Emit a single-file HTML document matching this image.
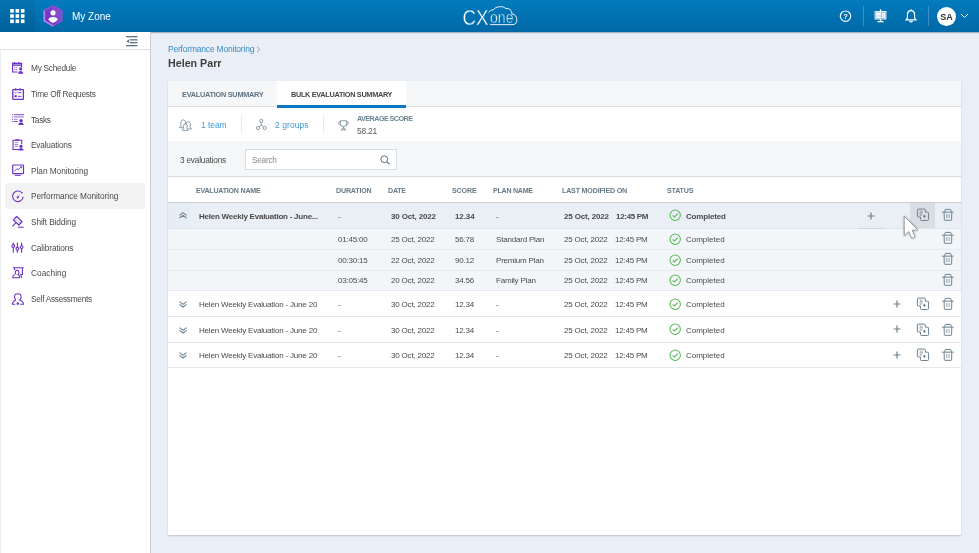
<!DOCTYPE html>
<html><head><meta charset="utf-8">
<style>
*{box-sizing:border-box;margin:0;padding:0}
html,body{width:979px;height:553px;overflow:hidden}
body{font-family:"Liberation Sans",sans-serif;background:#eaeff7;position:relative}
.a{position:absolute;white-space:nowrap;will-change:transform}
svg.a{overflow:visible}
</style></head><body>
<div class="a" style="left:0px;top:0px;width:979px;height:32px;background:linear-gradient(#037bbd,#0068a6);box-shadow:0 1px 1px rgba(0,40,80,.3)"></div>
<div class="a" style="left:0px;top:0px;width:35px;height:32px;background:linear-gradient(#0573b2,#00609a);"></div>
<svg class="a" style="left:0px;top:0px;" width="35" height="32" viewBox="0 0 35 32"><g fill="#fff"><rect x="10.2" y="9.0" width="3.6" height="3.7"/><rect x="10.2" y="14.2" width="3.6" height="3.7"/><rect x="10.2" y="19.4" width="3.6" height="3.7"/><rect x="15.549999999999999" y="9.0" width="3.6" height="3.7"/><rect x="15.549999999999999" y="14.2" width="3.6" height="3.7"/><rect x="15.549999999999999" y="19.4" width="3.6" height="3.7"/><rect x="20.9" y="9.0" width="3.6" height="3.7"/><rect x="20.9" y="14.2" width="3.6" height="3.7"/><rect x="20.9" y="19.4" width="3.6" height="3.7"/></g></svg>
<svg class="a" style="left:41.5px;top:4px;" width="22" height="24" viewBox="0 0 22 24"><polygon points="11,1 20.5,6.3 20.5,17.2 11,22.8 1.5,17.2 1.5,6.3" fill="#8c4fd8"/><polygon points="1.5,6.3 3.2,7.2 3.2,16.3 11,21 11,22.8 1.5,17.2" fill="#b584f0"/><polygon points="11,2.8 18.8,7.2 18.8,16.3 11,21 3.2,16.3 3.2,7.2" fill="#7436c4"/><polygon points="11,2.8 18.8,7.2 18.8,16.3 15,18.6 8,9" fill="#8a55d0" opacity=".7"/><circle cx="11" cy="8.8" r="2.6" fill="#fff"/><path d="M6.4 15.4 Q6.8 12.9 11 12.9 Q15.2 12.9 15.6 15.4 Q14.5 17.6 11 18.9 Q7.5 17.6 6.4 15.4Z" fill="#fff"/></svg>
<div class="a" style="left:71.5px;top:12.00px;font-size:10px;line-height:10px;color:#fff;font-weight:normal;">My Zone</div>
<svg class="a" style="left:455px;top:0px;" width="70" height="32" viewBox="0 0 70 32"><text x="7.6" y="25" font-family="Liberation Sans" font-size="22.5" textLength="26" lengthAdjust="spacingAndGlyphs" fill="#fff" stroke="#0670b0" stroke-width="0.4">CX</text></svg>
<svg class="a" style="left:486px;top:5px;" width="32" height="22" viewBox="0 0 32 22"><path d="M4 19.6 L27 19.6 Q31 19.3 30.8 14.5 Q30.6 9.5 26 9 Q25.5 3 20 3.5 Q17 0.8 12.5 1.8 Q8.5 2.5 7.5 4.8 Q4.5 4.5 2.6 7.5" fill="none" stroke="#fff" stroke-width="0.9"/><text x="4" y="18.2" font-family="Liberation Sans" font-size="16" textLength="23.5" lengthAdjust="spacingAndGlyphs" fill="#fff" stroke="#0773b4" stroke-width="0.55">one</text></svg>
<svg class="a" style="left:839px;top:10px;" width="13" height="13" viewBox="0 0 13 13"><circle cx="6.5" cy="6.2" r="5.2" fill="none" stroke="#fff" stroke-width="1.2"/><text x="6.5" y="9.1" text-anchor="middle" font-family="Liberation Sans" font-weight="bold" font-size="7.5" fill="#fff">?</text></svg>
<div class="a" style="left:863px;top:6px;width:1px;height:20px;background:rgba(255,255,255,.22);"></div>
<svg class="a" style="left:874px;top:9px;" width="13" height="14" viewBox="0 0 13 14"><g fill="#fff"><rect x="5.9" y="0.4" width="1.3" height="2"/><rect x="0.6" y="2" width="11.8" height="8.4" rx="0.5"/><rect x="5.9" y="10" width="1.3" height="2.4"/><rect x="3.5" y="12" width="6" height="1.3"/></g><g fill="none" stroke="#5aa3d6" stroke-width=".55"><rect x="1.7" y="3.1" width="9.6" height="6.2"/><path d="M7.4 3.1 V9.3 M1.7 7 H7.4 M9.1 3.1 V9.3"/></g></svg>
<svg class="a" style="left:905px;top:9px;" width="12" height="14" viewBox="0 0 12 14"><path d="M6 1.6 Q9.6 1.6 9.6 6 L9.6 9 L11 10.9 L1 10.9 L2.4 9 L2.4 6 Q2.4 1.6 6 1.6Z" fill="none" stroke="#fff" stroke-width="1.2"/><path d="M4.4 12 Q6 13.6 7.6 12" fill="none" stroke="#fff" stroke-width="1.2"/><rect x="5.4" y="0.3" width="1.2" height="1.6" fill="#fff"/></svg>
<div class="a" style="left:928px;top:6px;width:1px;height:20px;background:rgba(255,255,255,.22);"></div>
<div class="a" style="left:937px;top:6.5px;width:19px;height:19px;background:#fff;border-radius:50%"></div>
<div class="a" style="left:937px;top:13.00px;font-size:9px;line-height:9px;color:#333;font-weight:bold;width:19px;text-align:center">SA</div>
<svg class="a" style="left:960px;top:13px;" width="9" height="6" viewBox="0 0 9 6"><path d="M1 1 L4.5 4.5 L8 1" fill="none" stroke="#fff" stroke-width="1"/></svg>
<div class="a" style="left:0px;top:32px;width:151px;height:521px;background:#fff;border-right:1px solid #cbd0d6"></div>
<div class="a" style="left:0px;top:49px;width:150px;height:1px;background:#dcdfe3;"></div>
<div class="a" style="left:0px;top:50px;width:1px;height:503px;background:#eeeeee;"></div>
<svg class="a" style="left:126px;top:36px;" width="12" height="11" viewBox="0 0 12 11"><g fill="#5f7381"><rect x="0" y="0" width="11.5" height="1.3"/><rect x="4" y="3.2" width="7.5" height="1.3"/><rect x="4" y="6" width="7.5" height="1.3"/><rect x="0" y="9" width="11.5" height="1.3"/><polygon points="0.3,5.2 3.2,3.2 3.2,7.2"/></g></svg>
<div class="a" style="left:5px;top:183px;width:140px;height:26px;background:#f3f3f3;border-radius:3px"></div>
<div class="a" style="left:31px;top:64.00px;font-size:8.3px;line-height:8.3px;color:#4b4b4b;font-weight:normal;letter-spacing:-0.262px;">My Schedule</div>
<div class="a" style="left:31px;top:90.00px;font-size:8.3px;line-height:8.3px;color:#4b4b4b;font-weight:normal;letter-spacing:-0.237px;">Time Off Requests</div>
<div class="a" style="left:31px;top:116.00px;font-size:8.3px;line-height:8.3px;color:#4b4b4b;font-weight:normal;letter-spacing:-0.303px;">Tasks</div>
<div class="a" style="left:31px;top:141.00px;font-size:8.3px;line-height:8.3px;color:#4b4b4b;font-weight:normal;letter-spacing:-0.201px;">Evaluations</div>
<div class="a" style="left:31px;top:167.00px;font-size:8.3px;line-height:8.3px;color:#4b4b4b;font-weight:normal;letter-spacing:-0.038px;">Plan Monitoring</div>
<div class="a" style="left:31px;top:192.00px;font-size:8.3px;line-height:8.3px;color:#4b4b4b;font-weight:normal;letter-spacing:-0.058px;">Performance Monitoring</div>
<div class="a" style="left:31px;top:218.00px;font-size:8.3px;line-height:8.3px;color:#4b4b4b;font-weight:normal;letter-spacing:-0.123px;">Shift Bidding</div>
<div class="a" style="left:31px;top:244.00px;font-size:8.3px;line-height:8.3px;color:#4b4b4b;font-weight:normal;letter-spacing:-0.119px;">Calibrations</div>
<div class="a" style="left:31px;top:269.00px;font-size:8.3px;line-height:8.3px;color:#4b4b4b;font-weight:normal;letter-spacing:0.029px;">Coaching</div>
<div class="a" style="left:31px;top:295.00px;font-size:8.3px;line-height:8.3px;color:#4b4b4b;font-weight:normal;letter-spacing:-0.288px;">Self Assessments</div>
<svg class="a" style="left:12px;top:62px;" width="12.5" height="12.5" viewBox="0 0 12.5 12.5"><path d="M9.55 5.3 V1.2 H0.55 V9.95 H5.7" fill="none" stroke="#6a32c6" stroke-width="1.1"/><rect x="0" y="0.9" width="10.1" height="2.9" fill="#6a32c6"/><rect x="1.3" y="2.05" width="7.8" height="0.55" fill="#fff" opacity=".75"/><rect x="2.3" y="0" width="1" height="1.2" fill="#6a32c6"/><rect x="6.4" y="0" width="1" height="1.2" fill="#6a32c6"/><g fill="#6a32c6" opacity=".8"><rect x="2.1" y="5.2" width="1.3" height="0.9"/><rect x="4" y="5.2" width="1.3" height="0.9"/><rect x="2.1" y="7" width="1.3" height="0.9"/><rect x="4" y="7" width="1.3" height="0.9"/></g><circle cx="8.7" cy="6.9" r="1.55" fill="#6a32c6"/><path d="M6.1 11.8 Q6.4 9 8.7 9 Q11 9 11.4 11.8Z" fill="#6a32c6"/></svg>
<svg class="a" style="left:12px;top:88px;" width="12.5" height="12.5" viewBox="0 0 12.5 12.5"><rect x="0.8" y="1.7" width="10.6" height="9.6" rx="0.6" fill="none" stroke="#6a32c6" stroke-width="1.3"/><rect x="3.1" y="0.2" width="1.2" height="2.4" fill="#6a32c6"/><rect x="7.4" y="0.2" width="1.2" height="2.4" fill="#6a32c6"/><g fill="#6a32c6"><path d="M2.4 4.2 L3.3 5.3 L4.9 3.6" stroke="#6a32c6" stroke-width=".7" fill="none"/><rect x="5.9" y="4.2" width="3.6" height="0.9"/><rect x="2.4" y="7.2" width="2.3" height="2"/><rect x="5.9" y="7.9" width="3.6" height="0.9"/></g></svg>
<svg class="a" style="left:12px;top:114px;" width="12.5" height="12.5" viewBox="0 0 12.5 12.5"><g fill="#6a32c6"><circle cx="0.7" cy="0.7" r="0.6"/><circle cx="0.7" cy="3" r="0.6"/><circle cx="0.7" cy="5.3" r="0.6"/><circle cx="0.7" cy="7.6" r="0.6"/><rect x="2" y="0.3" width="9.9" height="0.9"/><rect x="2" y="2.5" width="9.9" height="0.9" opacity=".8"/><rect x="2" y="4.8" width="3.7" height="0.9" opacity=".7"/><rect x="2" y="7.1" width="3.7" height="0.9"/><circle cx="9" cy="6.6" r="1.7"/><path d="M6.1 10.9 Q6.8 8.3 9 8.3 Q11.2 8.3 11.9 10.9Z"/></g></svg>
<svg class="a" style="left:12px;top:139px;" width="12.5" height="12.5" viewBox="0 0 12.5 12.5"><path d="M9.6 10.5 L1 10.5 L1 1.3 L9.7 1.3 L9.7 5.3" fill="none" stroke="#6a32c6" stroke-width="1.1"/><rect x="3.2" y="0.3" width="4" height="1.4" fill="#6a32c6"/><g fill="#6a32c6" opacity=".75"><rect x="2.6" y="3.3" width="3.5" height="0.8"/><rect x="2.6" y="5.1" width="3.5" height="0.8"/><rect x="2.6" y="6.9" width="3.5" height="0.8"/></g><circle cx="9" cy="7.3" r="1.6" fill="#6a32c6"/><path d="M6.3 11.6 Q6.8 8.9 9 8.9 Q11.2 8.9 11.7 11.6Z" fill="#6a32c6"/></svg>
<svg class="a" style="left:12px;top:164px;" width="12.5" height="12.5" viewBox="0 0 12.5 12.5"><rect x="0.7" y="1" width="10.8" height="8.6" rx="0.6" fill="none" stroke="#6a32c6" stroke-width="1.2"/><rect x="2.8" y="10.8" width="6" height="1" fill="#6a32c6"/><path d="M2.2 7.4 L4.9 4.7 L6.1 5.8 L8.9 3.2" fill="none" stroke="#6a32c6" stroke-width="0.9"/><polygon points="7.6,2.4 10,2.3 9.9,4.6" fill="#6a32c6"/></svg>
<svg class="a" style="left:12px;top:190px;" width="12.5" height="12.5" viewBox="0 0 12.5 12.5"><path d="M10.3 3.3 A5.3 5.3 0 1 0 11.2 6.8" fill="none" stroke="#6a32c6" stroke-width="1.1"/><path d="M9.6 2.4 A5.3 5.3 0 0 1 10.3 3.3" fill="none" stroke="#6a32c6" stroke-width="1.1"/><path d="M4.9 7.5 L7.9 4.7 L6.4 8" fill="#6a32c6"/><circle cx="5.5" cy="7.5" r="0.9" fill="#6a32c6"/></svg>
<svg class="a" style="left:12px;top:215.5px;" width="12.5" height="12.5" viewBox="0 0 12.5 12.5"><polygon points="4.6,0.5 10.1,5.8 6.8,9 1.3,3.8" fill="none" stroke="#6a32c6" stroke-width="1.2" stroke-linejoin="round"/><path d="M2.9 2.3 L8.4 7.5" stroke="#6a32c6" stroke-width=".6" opacity=".6"/><path d="M0.4 10.4 L3.9 6.6" stroke="#6a32c6" stroke-width="1.1"/><rect x="6" y="10.6" width="5.7" height="1.4" fill="#6a32c6" opacity=".75"/></svg>
<svg class="a" style="left:12px;top:241.5px;" width="12.5" height="12.5" viewBox="0 0 12.5 12.5"><g stroke="#6a32c6" stroke-width="1.1" fill="#fff"><path d="M1.3 0.6 V10.8 M5.4 0.6 V10.8 M9.6 0.6 V10.8"/><circle cx="1.3" cy="4" r="1.4"/><circle cx="5.4" cy="6.8" r="1.4"/><circle cx="9.6" cy="5.1" r="1.4"/></g></svg>
<svg class="a" style="left:12px;top:267px;" width="12.5" height="12.5" viewBox="0 0 12.5 12.5"><g fill="none" stroke="#6a32c6" stroke-width="1.1"><path d="M1 0.8 L11.7 0.8 M2.4 0.8 L2.6 3 M10.4 0.8 L10.4 7.2 L8.7 7.4 L9.7 11"/><path d="M4.2 7.4 Q3.2 6.8 3.2 5.3 Q3.4 3.4 5.1 3.4 Q6.9 3.4 7 5.3 Q7 6.8 6 7.4 Q7.8 8.2 7.6 10.8 L0.8 10.8 Q0.6 8.2 2.6 7.5"/></g></svg>
<svg class="a" style="left:12px;top:292.5px;" width="12.5" height="12.5" viewBox="0 0 12.5 12.5"><g fill="none" stroke="#6a32c6" stroke-width="1.1"><path d="M4 6.9 Q2.5 5.8 2.5 3.7 Q2.6 0.8 5.8 0.8 Q9 0.8 9.1 3.7 Q9.1 5.8 7.6 6.9 Q11.5 8.2 11.5 11.3 L8.3 11.3 M3.3 11.3 L0.4 11.3 Q0.5 8.2 4 6.9"/></g><polygon points="5.8,8.6 6.4,9.8 7.6,9.9 6.7,10.8 6.9,12 5.8,11.4 4.7,12 4.9,10.8 4,9.9 5.2,9.8" fill="#6a32c6"/></svg>
<div class="a" style="left:168px;top:45.00px;font-size:8.5px;line-height:8.5px;color:#3b8ac2;font-weight:normal;letter-spacing:-0.205px;">Performance Monitoring</div>
<svg class="a" style="left:256.3px;top:46px;" width="5" height="7" viewBox="0 0 5 7"><path d="M1 0.8 L3.8 3.5 L1 6.2" fill="none" stroke="#7d8a94" stroke-width=".8"/></svg>
<div class="a" style="left:168px;top:58.00px;font-size:10.7px;line-height:10.7px;color:#3e3e3e;font-weight:bold;">Helen Parr</div>
<div class="a" style="left:168px;top:81px;width:793px;height:454px;background:#fff;box-shadow:0 1px 1.5px rgba(110,120,140,.35)"></div>
<div class="a" style="left:168px;top:81px;width:793px;height:25.5px;background:#f5f7f9;"></div>
<div class="a" style="left:168px;top:106px;width:793px;height:1px;background:#d9dde1;"></div>
<div class="a" style="left:277px;top:81px;width:129px;height:26px;background:#fff;"></div>
<div class="a" style="left:277px;top:104.5px;width:129px;height:2.5px;background:#0a78c2;"></div>
<div class="a" style="left:182px;top:91.00px;font-size:7.3px;line-height:7.3px;color:#5f7383;font-weight:bold;letter-spacing:-0.241px;">EVALUATION SUMMARY</div>
<div class="a" style="left:290.8px;top:91.00px;font-size:7.3px;line-height:7.3px;color:#454545;font-weight:bold;letter-spacing:-0.302px;">BULK EVALUATION SUMMARY</div>
<svg class="a" style="left:179px;top:117.5px;" width="13" height="13" viewBox="0 0 13 13"><g fill="#fff" stroke="#7b8e9a" stroke-width=".85" stroke-linejoin="round"><path d="M2.4 7.6 Q1.6 6.6 1.8 4.4 Q2.1 1.8 4.2 1.8 Q6.2 1.8 6.5 4.2 Q6.7 6.5 5.6 7.6 Q7 8.3 7 9.7 L0.6 9.7 Q0.6 8.3 2.4 7.6Z"/><path d="M7.6 9 Q6.7 8 6.9 6 Q7.2 3.6 9.2 3.6 Q11.2 3.6 11.4 6 Q11.6 8 10.7 9 Q12.3 9.6 12.3 11 L6 11 Q6 9.6 7.6 9Z"/><path d="M4.8 10.2 Q4.1 9.4 4.3 7.8 Q4.6 6 6.3 6 Q8 6 8.2 7.8 Q8.4 9.4 7.7 10.2 Q9.1 10.8 9.1 12.3 L3.4 12.3 Q3.4 10.8 4.8 10.2Z"/></g></svg>
<div class="a" style="left:201.3px;top:121.00px;font-size:8.5px;line-height:8.5px;color:#3f9bd3;font-weight:normal;letter-spacing:-0.064px;">1 team</div>
<div class="a" style="left:241px;top:115px;width:1px;height:18px;background:#e6e9ed;"></div>
<svg class="a" style="left:256px;top:119px;" width="11" height="11" viewBox="0 0 11 11"><g fill="none" stroke="#7b8e9a" stroke-width=".9"><circle cx="5.3" cy="2" r="1.6"/><circle cx="2" cy="9" r="1.6"/><circle cx="8.6" cy="9" r="1.6"/><path d="M5.3 3.6 V6 L3.2 7.8 M5.3 6 L7.4 7.8"/></g></svg>
<div class="a" style="left:275.4px;top:121.00px;font-size:8.5px;line-height:8.5px;color:#3f9bd3;font-weight:normal;letter-spacing:0.066px;">2 groups</div>
<div class="a" style="left:323px;top:115px;width:1px;height:18px;background:#e6e9ed;"></div>
<svg class="a" style="left:337.5px;top:119.5px;" width="11" height="11" viewBox="0 0 11 11"><g fill="none" stroke="#7b8e9a" stroke-width=".9"><path d="M2.3 0.8 H8.7 V3.6 Q8.7 6.6 5.5 6.6 Q2.3 6.6 2.3 3.6Z"/><path d="M2.3 1.8 Q0.5 1.8 0.6 3.2 Q0.8 4.8 2.6 5 M8.7 1.8 Q10.5 1.8 10.4 3.2 Q10.2 4.8 8.4 5"/><path d="M5.5 6.6 V8.4 M3 10 H8 L6.6 8.4 H4.4Z"/></g></svg>
<div class="a" style="left:357px;top:115.00px;font-size:7.3px;line-height:7.3px;color:#6f8797;font-weight:bold;letter-spacing:-0.619px;">AVERAGE SCORE</div>
<div class="a" style="left:357px;top:127.00px;font-size:8.5px;line-height:8.5px;color:#5a5a5a;font-weight:normal;letter-spacing:-0.254px;">58.21</div>
<div class="a" style="left:168px;top:141px;width:793px;height:35px;background:#f5f7f9;"></div>
<div class="a" style="left:168px;top:176px;width:793px;height:1px;background:#d8dbde;"></div>
<div class="a" style="left:180px;top:156.00px;font-size:8.3px;line-height:8.3px;color:#4a4a4a;font-weight:normal;letter-spacing:-0.227px;">3 evaluations</div>
<div class="a" style="left:245px;top:149px;width:151.5px;height:20.5px;background:#fff;border:1px solid #d6dde4"></div>
<div class="a" style="left:252.3px;top:156.00px;font-size:8.3px;line-height:8.3px;color:#8a8a8a;font-weight:normal;letter-spacing:-0.264px;">Search</div>
<svg class="a" style="left:380px;top:155px;" width="11" height="10" viewBox="0 0 11 10"><circle cx="4.3" cy="4.2" r="3.4" fill="none" stroke="#5e6e7a" stroke-width="1"/><path d="M6.8 6.7 L9.6 9.4" stroke="#5e6e7a" stroke-width="1.1"/></svg>
<div class="a" style="left:196px;top:188.00px;font-size:7.1px;line-height:7.1px;color:#657b89;font-weight:bold;letter-spacing:-0.229px;">EVALUATION NAME</div>
<div class="a" style="left:336px;top:188.00px;font-size:7.1px;line-height:7.1px;color:#657b89;font-weight:bold;letter-spacing:-0.178px;">DURATION</div>
<div class="a" style="left:388.4px;top:188.00px;font-size:7.1px;line-height:7.1px;color:#657b89;font-weight:bold;letter-spacing:-0.228px;">DATE</div>
<div class="a" style="left:452.4px;top:188.00px;font-size:7.1px;line-height:7.1px;color:#657b89;font-weight:bold;letter-spacing:-0.142px;">SCORE</div>
<div class="a" style="left:493.2px;top:188.00px;font-size:7.1px;line-height:7.1px;color:#657b89;font-weight:bold;letter-spacing:-0.259px;">PLAN NAME</div>
<div class="a" style="left:562.2px;top:188.00px;font-size:7.1px;line-height:7.1px;color:#657b89;font-weight:bold;letter-spacing:-0.175px;">LAST MODIFIED ON</div>
<div class="a" style="left:667px;top:188.00px;font-size:7.1px;line-height:7.1px;color:#657b89;font-weight:bold;letter-spacing:-0.192px;">STATUS</div>
<div class="a" style="left:168px;top:202px;width:793px;height:1.3px;background:#c9cdd1;"></div>
<div class="a" style="left:168px;top:203.2px;width:793px;height:25px;background:#eaeef5;"></div>
<div class="a" style="left:168px;top:203.2px;width:21.5px;height:25px;background:#e7edf5;"></div>
<div class="a" style="left:168px;top:228px;width:793px;height:0.8px;background:#e1e6ec;"></div>
<svg class="a" style="left:179px;top:212px;" width="8" height="7" viewBox="0 0 8 7"><path d="M0.5 3.4 L4 0.7 L7.5 3.4 M0.5 6 L4 3.3 L7.5 6" fill="none" stroke="#6b8190" stroke-width="1.05"/></svg>
<div class="a" style="left:198.6px;top:213.00px;font-size:8.0px;line-height:8.0px;color:#4a4a4a;font-weight:bold;letter-spacing:-0.235px;">Helen Weekly Evaluation - June...</div>
<div class="a" style="left:338px;top:213.00px;font-size:8.0px;line-height:8.0px;color:#4a4a4a;font-weight:normal;letter-spacing:-0.133px;">-</div>
<div class="a" style="left:390.8px;top:213.00px;font-size:8.0px;line-height:8.0px;color:#4a4a4a;font-weight:bold;letter-spacing:-0.156px;">30 Oct, 2022</div>
<div class="a" style="left:455.2px;top:213.00px;font-size:8.0px;line-height:8.0px;color:#4a4a4a;font-weight:bold;letter-spacing:-0.086px;">12.34</div>
<div class="a" style="left:496px;top:213.00px;font-size:8.0px;line-height:8.0px;color:#4a4a4a;font-weight:normal;letter-spacing:-0.133px;">-</div>
<div class="a" style="left:564.1px;top:213.00px;font-size:8.0px;line-height:8.0px;color:#4a4a4a;font-weight:bold;letter-spacing:-0.156px;">25 Oct, 2022</div>
<div class="a" style="left:615.7px;top:213.00px;font-size:8.0px;line-height:8.0px;color:#4a4a4a;font-weight:bold;letter-spacing:-0.310px;">12:45 PM</div>
<svg class="a" style="left:668.8px;top:209.0px;" width="13" height="13" viewBox="0 0 13 13"><circle cx="6.2" cy="6.2" r="5.2" fill="none" stroke="#5cb85c" stroke-width="1.05"/><path d="M3.6 6.3 L5.4 8 L8.8 4.6" fill="none" stroke="#5cb85c" stroke-width="1.1"/></svg>
<div class="a" style="left:686px;top:213.00px;font-size:8.0px;line-height:8.0px;color:#4a4a4a;font-weight:bold;letter-spacing:-0.193px;">Completed</div>
<div class="a" style="left:910px;top:203.2px;width:25px;height:25px;background:#d9dee5;"></div>
<div class="a" style="left:858px;top:227.5px;width:26px;height:1px;background:#cfd5dc;"></div>
<svg class="a" style="left:867.2px;top:211.5px;" width="8" height="8" viewBox="0 0 8 8"><path d="M4 0.5 V7.5 M0.5 4 H7.5" stroke="#6d818c" stroke-width="1.2"/></svg>
<svg class="a" style="left:916.6px;top:209.4px;" width="12" height="12" viewBox="0 0 12 12"><path d="M3.5 8.05 L1.3 8.05 Q0.4 8.05 0.4 7.1 L0.4 1 Q0.4 0.1 1.3 0.1 L7.4 0.1 Q8.35 0.1 8.35 1 L8.35 3.2 L10.6 3.2 Q11.55 3.2 11.55 4.1 L11.55 10.6 Q11.55 11.5 10.6 11.5 L4.4 11.5 Q3.5 11.5 3.5 10.6Z" fill="none" stroke="#6d818c" stroke-width="1"/><g stroke="#6d818c" stroke-width=".75" opacity=".85"><path d="M2.6 2.2 H5.7 M2.6 3.65 H5.7 M2.6 5.1 H5.7 M2.6 6.3 H4.7"/></g><path d="M7.4 5.9 V8.7 M6 7.3 H8.8" stroke="#6d818c" stroke-width="1.1"/></svg>
<svg class="a" style="left:942.2px;top:209.4px;" width="12" height="12" viewBox="0 0 12 12"><g fill="none" stroke="#6d818c" stroke-width="1"><path d="M0 3.15 H11.6"/><path d="M2.9 3.1 V1.2 Q2.9 0.4 3.7 0.4 H8.3 Q9.1 0.4 9.1 1.2 V3.1"/><path d="M2.1 3.2 L2.3 10.8 Q2.35 11.3 2.9 11.3 H9 Q9.55 11.3 9.6 10.8 L9.8 3.2"/></g><g fill="#6d818c" opacity=".8"><rect x="4.3" y="5" width=".9" height="4"/><rect x="6.6" y="5" width=".9" height="4"/></g></svg>
<div class="a" style="left:168px;top:228.5px;width:793px;height:62.2px;background:#f3f6f9;"></div>
<div class="a" style="left:168px;top:248.7px;width:793px;height:0.8px;background:#e6eaee;"></div>
<div class="a" style="left:168px;top:269.8px;width:793px;height:0.8px;background:#e6eaee;"></div>
<div class="a" style="left:168px;top:290.3px;width:793px;height:0.8px;background:#e6eaee;"></div>
<div class="a" style="left:338px;top:236.00px;font-size:8.0px;line-height:8.0px;color:#4a4a4a;font-weight:normal;letter-spacing:-0.195px;">01:45:00</div>
<div class="a" style="left:390.8px;top:236.00px;font-size:8.0px;line-height:8.0px;color:#4a4a4a;font-weight:normal;letter-spacing:-0.191px;">25 Oct, 2022</div>
<div class="a" style="left:455.2px;top:236.00px;font-size:8.0px;line-height:8.0px;color:#4a4a4a;font-weight:normal;letter-spacing:-0.200px;">56.78</div>
<div class="a" style="left:496px;top:236.00px;font-size:8.0px;line-height:8.0px;color:#4a4a4a;font-weight:normal;letter-spacing:-0.195px;">Standard Plan</div>
<div class="a" style="left:564.1px;top:236.00px;font-size:8.0px;line-height:8.0px;color:#4a4a4a;font-weight:normal;letter-spacing:-0.191px;">25 Oct, 2022</div>
<div class="a" style="left:614.8px;top:236.00px;font-size:8.0px;line-height:8.0px;color:#4a4a4a;font-weight:normal;letter-spacing:-0.214px;">12:45 PM</div>
<svg class="a" style="left:668.8px;top:232.8px;" width="13" height="13" viewBox="0 0 13 13"><circle cx="6.2" cy="6.2" r="5.2" fill="none" stroke="#5cb85c" stroke-width="1.05"/><path d="M3.6 6.3 L5.4 8 L8.8 4.6" fill="none" stroke="#5cb85c" stroke-width="1.1"/></svg>
<div class="a" style="left:686px;top:236.00px;font-size:8.0px;line-height:8.0px;color:#4a4a4a;font-weight:normal;letter-spacing:-0.009px;">Completed</div>
<svg class="a" style="left:942.2px;top:232.2px;" width="12" height="12" viewBox="0 0 12 12"><g fill="none" stroke="#6d818c" stroke-width="1"><path d="M0 3.15 H11.6"/><path d="M2.9 3.1 V1.2 Q2.9 0.4 3.7 0.4 H8.3 Q9.1 0.4 9.1 1.2 V3.1"/><path d="M2.1 3.2 L2.3 10.8 Q2.35 11.3 2.9 11.3 H9 Q9.55 11.3 9.6 10.8 L9.8 3.2"/></g><g fill="#6d818c" opacity=".8"><rect x="4.3" y="5" width=".9" height="4"/><rect x="6.6" y="5" width=".9" height="4"/></g></svg>
<div class="a" style="left:338px;top:257.00px;font-size:8.0px;line-height:8.0px;color:#4a4a4a;font-weight:normal;letter-spacing:-0.195px;">00:30:15</div>
<div class="a" style="left:390.8px;top:257.00px;font-size:8.0px;line-height:8.0px;color:#4a4a4a;font-weight:normal;letter-spacing:-0.191px;">22 Oct, 2022</div>
<div class="a" style="left:455.2px;top:257.00px;font-size:8.0px;line-height:8.0px;color:#4a4a4a;font-weight:normal;letter-spacing:-0.200px;">90.12</div>
<div class="a" style="left:496px;top:257.00px;font-size:8.0px;line-height:8.0px;color:#4a4a4a;font-weight:normal;letter-spacing:-0.209px;">Premium Plan</div>
<div class="a" style="left:564.1px;top:257.00px;font-size:8.0px;line-height:8.0px;color:#4a4a4a;font-weight:normal;letter-spacing:-0.191px;">25 Oct, 2022</div>
<div class="a" style="left:614.8px;top:257.00px;font-size:8.0px;line-height:8.0px;color:#4a4a4a;font-weight:normal;letter-spacing:-0.214px;">12:45 PM</div>
<svg class="a" style="left:668.8px;top:253.60000000000002px;" width="13" height="13" viewBox="0 0 13 13"><circle cx="6.2" cy="6.2" r="5.2" fill="none" stroke="#5cb85c" stroke-width="1.05"/><path d="M3.6 6.3 L5.4 8 L8.8 4.6" fill="none" stroke="#5cb85c" stroke-width="1.1"/></svg>
<div class="a" style="left:686px;top:257.00px;font-size:8.0px;line-height:8.0px;color:#4a4a4a;font-weight:normal;letter-spacing:-0.009px;">Completed</div>
<svg class="a" style="left:942.2px;top:253.0px;" width="12" height="12" viewBox="0 0 12 12"><g fill="none" stroke="#6d818c" stroke-width="1"><path d="M0 3.15 H11.6"/><path d="M2.9 3.1 V1.2 Q2.9 0.4 3.7 0.4 H8.3 Q9.1 0.4 9.1 1.2 V3.1"/><path d="M2.1 3.2 L2.3 10.8 Q2.35 11.3 2.9 11.3 H9 Q9.55 11.3 9.6 10.8 L9.8 3.2"/></g><g fill="#6d818c" opacity=".8"><rect x="4.3" y="5" width=".9" height="4"/><rect x="6.6" y="5" width=".9" height="4"/></g></svg>
<div class="a" style="left:338px;top:277.00px;font-size:8.0px;line-height:8.0px;color:#4a4a4a;font-weight:normal;letter-spacing:-0.195px;">03:05:45</div>
<div class="a" style="left:390.8px;top:277.00px;font-size:8.0px;line-height:8.0px;color:#4a4a4a;font-weight:normal;letter-spacing:-0.191px;">20 Oct, 2022</div>
<div class="a" style="left:455.2px;top:277.00px;font-size:8.0px;line-height:8.0px;color:#4a4a4a;font-weight:normal;letter-spacing:-0.200px;">34.56</div>
<div class="a" style="left:496px;top:277.00px;font-size:8.0px;line-height:8.0px;color:#4a4a4a;font-weight:normal;letter-spacing:-0.190px;">Family Plan</div>
<div class="a" style="left:564.1px;top:277.00px;font-size:8.0px;line-height:8.0px;color:#4a4a4a;font-weight:normal;letter-spacing:-0.191px;">25 Oct, 2022</div>
<div class="a" style="left:614.8px;top:277.00px;font-size:8.0px;line-height:8.0px;color:#4a4a4a;font-weight:normal;letter-spacing:-0.214px;">12:45 PM</div>
<svg class="a" style="left:668.8px;top:274.2px;" width="13" height="13" viewBox="0 0 13 13"><circle cx="6.2" cy="6.2" r="5.2" fill="none" stroke="#5cb85c" stroke-width="1.05"/><path d="M3.6 6.3 L5.4 8 L8.8 4.6" fill="none" stroke="#5cb85c" stroke-width="1.1"/></svg>
<div class="a" style="left:686px;top:277.00px;font-size:8.0px;line-height:8.0px;color:#4a4a4a;font-weight:normal;letter-spacing:-0.009px;">Completed</div>
<svg class="a" style="left:942.2px;top:273.59999999999997px;" width="12" height="12" viewBox="0 0 12 12"><g fill="none" stroke="#6d818c" stroke-width="1"><path d="M0 3.15 H11.6"/><path d="M2.9 3.1 V1.2 Q2.9 0.4 3.7 0.4 H8.3 Q9.1 0.4 9.1 1.2 V3.1"/><path d="M2.1 3.2 L2.3 10.8 Q2.35 11.3 2.9 11.3 H9 Q9.55 11.3 9.6 10.8 L9.8 3.2"/></g><g fill="#6d818c" opacity=".8"><rect x="4.3" y="5" width=".9" height="4"/><rect x="6.6" y="5" width=".9" height="4"/></g></svg>
<div class="a" style="left:168px;top:316.2px;width:793px;height:1px;background:#e6e9ec;"></div>
<svg class="a" style="left:179px;top:300.90000000000003px;" width="8" height="7" viewBox="0 0 8 7"><path d="M0.5 0.7 L4 3.4 L7.5 0.7 M0.5 3.3 L4 6 L7.5 3.3" fill="none" stroke="#6b8190" stroke-width="1.05"/></svg>
<div class="a" style="left:198.8px;top:301.00px;font-size:8.0px;line-height:8.0px;color:#4a4a4a;font-weight:normal;letter-spacing:-0.188px;">Helen Weekly Evaluation - June 20</div>
<div class="a" style="left:338px;top:301.00px;font-size:8.0px;line-height:8.0px;color:#4a4a4a;font-weight:normal;letter-spacing:-0.133px;">-</div>
<div class="a" style="left:390.8px;top:301.00px;font-size:8.0px;line-height:8.0px;color:#4a4a4a;font-weight:normal;letter-spacing:-0.191px;">30 Oct, 2022</div>
<div class="a" style="left:455.2px;top:301.00px;font-size:8.0px;line-height:8.0px;color:#4a4a4a;font-weight:normal;letter-spacing:-0.200px;">12.34</div>
<div class="a" style="left:496px;top:301.00px;font-size:8.0px;line-height:8.0px;color:#4a4a4a;font-weight:normal;letter-spacing:-0.133px;">-</div>
<div class="a" style="left:564.1px;top:301.00px;font-size:8.0px;line-height:8.0px;color:#4a4a4a;font-weight:normal;letter-spacing:-0.191px;">25 Oct, 2022</div>
<div class="a" style="left:614.8px;top:301.00px;font-size:8.0px;line-height:8.0px;color:#4a4a4a;font-weight:normal;letter-spacing:-0.214px;">12:45 PM</div>
<svg class="a" style="left:668.8px;top:297.8px;" width="13" height="13" viewBox="0 0 13 13"><circle cx="6.2" cy="6.2" r="5.2" fill="none" stroke="#5cb85c" stroke-width="1.05"/><path d="M3.6 6.3 L5.4 8 L8.8 4.6" fill="none" stroke="#5cb85c" stroke-width="1.1"/></svg>
<div class="a" style="left:686px;top:301.00px;font-size:8.0px;line-height:8.0px;color:#4a4a4a;font-weight:normal;letter-spacing:-0.009px;">Completed</div>
<svg class="a" style="left:892.8px;top:299.8px;" width="8" height="8" viewBox="0 0 8 8"><path d="M4 0.5 V7.5 M0.5 4 H7.5" stroke="#6d818c" stroke-width="1.2"/></svg>
<svg class="a" style="left:916.6px;top:298.20000000000005px;" width="12" height="12" viewBox="0 0 12 12"><path d="M3.5 8.05 L1.3 8.05 Q0.4 8.05 0.4 7.1 L0.4 1 Q0.4 0.1 1.3 0.1 L7.4 0.1 Q8.35 0.1 8.35 1 L8.35 3.2 L10.6 3.2 Q11.55 3.2 11.55 4.1 L11.55 10.6 Q11.55 11.5 10.6 11.5 L4.4 11.5 Q3.5 11.5 3.5 10.6Z" fill="none" stroke="#6d818c" stroke-width="1"/><g stroke="#6d818c" stroke-width=".75" opacity=".85"><path d="M2.6 2.2 H5.7 M2.6 3.65 H5.7 M2.6 5.1 H5.7 M2.6 6.3 H4.7"/></g><path d="M7.4 5.9 V8.7 M6 7.3 H8.8" stroke="#6d818c" stroke-width="1.1"/></svg>
<svg class="a" style="left:942.2px;top:298.0px;" width="12" height="12" viewBox="0 0 12 12"><g fill="none" stroke="#6d818c" stroke-width="1"><path d="M0 3.15 H11.6"/><path d="M2.9 3.1 V1.2 Q2.9 0.4 3.7 0.4 H8.3 Q9.1 0.4 9.1 1.2 V3.1"/><path d="M2.1 3.2 L2.3 10.8 Q2.35 11.3 2.9 11.3 H9 Q9.55 11.3 9.6 10.8 L9.8 3.2"/></g><g fill="#6d818c" opacity=".8"><rect x="4.3" y="5" width=".9" height="4"/><rect x="6.6" y="5" width=".9" height="4"/></g></svg>
<div class="a" style="left:168px;top:341.8px;width:793px;height:1px;background:#e6e9ec;"></div>
<svg class="a" style="left:179px;top:326.50000000000006px;" width="8" height="7" viewBox="0 0 8 7"><path d="M0.5 0.7 L4 3.4 L7.5 0.7 M0.5 3.3 L4 6 L7.5 3.3" fill="none" stroke="#6b8190" stroke-width="1.05"/></svg>
<div class="a" style="left:198.8px;top:327.00px;font-size:8.0px;line-height:8.0px;color:#4a4a4a;font-weight:normal;letter-spacing:-0.188px;">Helen Weekly Evaluation - June 20</div>
<div class="a" style="left:338px;top:327.00px;font-size:8.0px;line-height:8.0px;color:#4a4a4a;font-weight:normal;letter-spacing:-0.133px;">-</div>
<div class="a" style="left:390.8px;top:327.00px;font-size:8.0px;line-height:8.0px;color:#4a4a4a;font-weight:normal;letter-spacing:-0.191px;">30 Oct, 2022</div>
<div class="a" style="left:455.2px;top:327.00px;font-size:8.0px;line-height:8.0px;color:#4a4a4a;font-weight:normal;letter-spacing:-0.200px;">12.34</div>
<div class="a" style="left:496px;top:327.00px;font-size:8.0px;line-height:8.0px;color:#4a4a4a;font-weight:normal;letter-spacing:-0.133px;">-</div>
<div class="a" style="left:564.1px;top:327.00px;font-size:8.0px;line-height:8.0px;color:#4a4a4a;font-weight:normal;letter-spacing:-0.191px;">25 Oct, 2022</div>
<div class="a" style="left:614.8px;top:327.00px;font-size:8.0px;line-height:8.0px;color:#4a4a4a;font-weight:normal;letter-spacing:-0.214px;">12:45 PM</div>
<svg class="a" style="left:668.8px;top:323.40000000000003px;" width="13" height="13" viewBox="0 0 13 13"><circle cx="6.2" cy="6.2" r="5.2" fill="none" stroke="#5cb85c" stroke-width="1.05"/><path d="M3.6 6.3 L5.4 8 L8.8 4.6" fill="none" stroke="#5cb85c" stroke-width="1.1"/></svg>
<div class="a" style="left:686px;top:327.00px;font-size:8.0px;line-height:8.0px;color:#4a4a4a;font-weight:normal;letter-spacing:-0.009px;">Completed</div>
<svg class="a" style="left:892.8px;top:325.40000000000003px;" width="8" height="8" viewBox="0 0 8 8"><path d="M4 0.5 V7.5 M0.5 4 H7.5" stroke="#6d818c" stroke-width="1.2"/></svg>
<svg class="a" style="left:916.6px;top:323.80000000000007px;" width="12" height="12" viewBox="0 0 12 12"><path d="M3.5 8.05 L1.3 8.05 Q0.4 8.05 0.4 7.1 L0.4 1 Q0.4 0.1 1.3 0.1 L7.4 0.1 Q8.35 0.1 8.35 1 L8.35 3.2 L10.6 3.2 Q11.55 3.2 11.55 4.1 L11.55 10.6 Q11.55 11.5 10.6 11.5 L4.4 11.5 Q3.5 11.5 3.5 10.6Z" fill="none" stroke="#6d818c" stroke-width="1"/><g stroke="#6d818c" stroke-width=".75" opacity=".85"><path d="M2.6 2.2 H5.7 M2.6 3.65 H5.7 M2.6 5.1 H5.7 M2.6 6.3 H4.7"/></g><path d="M7.4 5.9 V8.7 M6 7.3 H8.8" stroke="#6d818c" stroke-width="1.1"/></svg>
<svg class="a" style="left:942.2px;top:323.6px;" width="12" height="12" viewBox="0 0 12 12"><g fill="none" stroke="#6d818c" stroke-width="1"><path d="M0 3.15 H11.6"/><path d="M2.9 3.1 V1.2 Q2.9 0.4 3.7 0.4 H8.3 Q9.1 0.4 9.1 1.2 V3.1"/><path d="M2.1 3.2 L2.3 10.8 Q2.35 11.3 2.9 11.3 H9 Q9.55 11.3 9.6 10.8 L9.8 3.2"/></g><g fill="#6d818c" opacity=".8"><rect x="4.3" y="5" width=".9" height="4"/><rect x="6.6" y="5" width=".9" height="4"/></g></svg>
<div class="a" style="left:168px;top:367.4px;width:793px;height:1px;background:#e6e9ec;"></div>
<svg class="a" style="left:179px;top:352.1px;" width="8" height="7" viewBox="0 0 8 7"><path d="M0.5 0.7 L4 3.4 L7.5 0.7 M0.5 3.3 L4 6 L7.5 3.3" fill="none" stroke="#6b8190" stroke-width="1.05"/></svg>
<div class="a" style="left:198.8px;top:352.00px;font-size:8.0px;line-height:8.0px;color:#4a4a4a;font-weight:normal;letter-spacing:-0.188px;">Helen Weekly Evaluation - June 20</div>
<div class="a" style="left:338px;top:352.00px;font-size:8.0px;line-height:8.0px;color:#4a4a4a;font-weight:normal;letter-spacing:-0.133px;">-</div>
<div class="a" style="left:390.8px;top:352.00px;font-size:8.0px;line-height:8.0px;color:#4a4a4a;font-weight:normal;letter-spacing:-0.191px;">30 Oct, 2022</div>
<div class="a" style="left:455.2px;top:352.00px;font-size:8.0px;line-height:8.0px;color:#4a4a4a;font-weight:normal;letter-spacing:-0.200px;">12.34</div>
<div class="a" style="left:496px;top:352.00px;font-size:8.0px;line-height:8.0px;color:#4a4a4a;font-weight:normal;letter-spacing:-0.133px;">-</div>
<div class="a" style="left:564.1px;top:352.00px;font-size:8.0px;line-height:8.0px;color:#4a4a4a;font-weight:normal;letter-spacing:-0.191px;">25 Oct, 2022</div>
<div class="a" style="left:614.8px;top:352.00px;font-size:8.0px;line-height:8.0px;color:#4a4a4a;font-weight:normal;letter-spacing:-0.214px;">12:45 PM</div>
<svg class="a" style="left:668.8px;top:349.0px;" width="13" height="13" viewBox="0 0 13 13"><circle cx="6.2" cy="6.2" r="5.2" fill="none" stroke="#5cb85c" stroke-width="1.05"/><path d="M3.6 6.3 L5.4 8 L8.8 4.6" fill="none" stroke="#5cb85c" stroke-width="1.1"/></svg>
<div class="a" style="left:686px;top:352.00px;font-size:8.0px;line-height:8.0px;color:#4a4a4a;font-weight:normal;letter-spacing:-0.009px;">Completed</div>
<svg class="a" style="left:892.8px;top:351.0px;" width="8" height="8" viewBox="0 0 8 8"><path d="M4 0.5 V7.5 M0.5 4 H7.5" stroke="#6d818c" stroke-width="1.2"/></svg>
<svg class="a" style="left:916.6px;top:349.40000000000003px;" width="12" height="12" viewBox="0 0 12 12"><path d="M3.5 8.05 L1.3 8.05 Q0.4 8.05 0.4 7.1 L0.4 1 Q0.4 0.1 1.3 0.1 L7.4 0.1 Q8.35 0.1 8.35 1 L8.35 3.2 L10.6 3.2 Q11.55 3.2 11.55 4.1 L11.55 10.6 Q11.55 11.5 10.6 11.5 L4.4 11.5 Q3.5 11.5 3.5 10.6Z" fill="none" stroke="#6d818c" stroke-width="1"/><g stroke="#6d818c" stroke-width=".75" opacity=".85"><path d="M2.6 2.2 H5.7 M2.6 3.65 H5.7 M2.6 5.1 H5.7 M2.6 6.3 H4.7"/></g><path d="M7.4 5.9 V8.7 M6 7.3 H8.8" stroke="#6d818c" stroke-width="1.1"/></svg>
<svg class="a" style="left:942.2px;top:349.2px;" width="12" height="12" viewBox="0 0 12 12"><g fill="none" stroke="#6d818c" stroke-width="1"><path d="M0 3.15 H11.6"/><path d="M2.9 3.1 V1.2 Q2.9 0.4 3.7 0.4 H8.3 Q9.1 0.4 9.1 1.2 V3.1"/><path d="M2.1 3.2 L2.3 10.8 Q2.35 11.3 2.9 11.3 H9 Q9.55 11.3 9.6 10.8 L9.8 3.2"/></g><g fill="#6d818c" opacity=".8"><rect x="4.3" y="5" width=".9" height="4"/><rect x="6.6" y="5" width=".9" height="4"/></g></svg>
<svg class="a" style="left:902px;top:214px;filter:drop-shadow(0 0.5px 1px rgba(0,0,0,.4))" width="18" height="26" viewBox="0 0 18 26"><path d="M2.3 2.3 L2.3 21.8 L6.8 17.5 L9.8 24.2 L13 22.9 L10.1 16.3 L15.8 15.9Z" fill="#fff" stroke="#8a8a8a" stroke-width="0.7" stroke-linejoin="round"/></svg>
</body></html>
